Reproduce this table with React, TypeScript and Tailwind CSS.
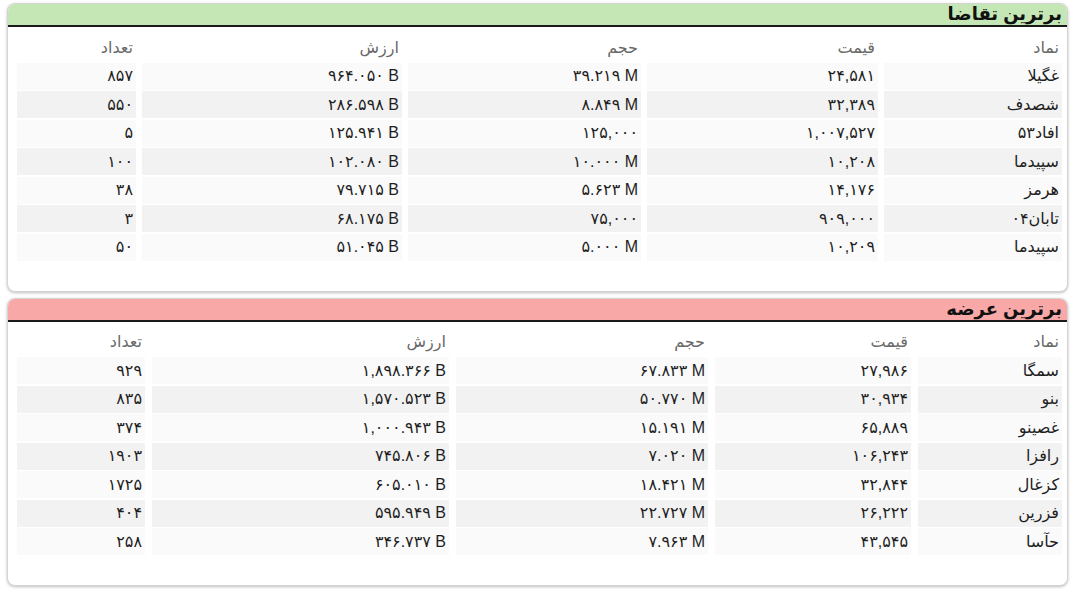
import React from "react";

type Row = [string, string, string, string, string];

const demand: Row[] = [
  ["غگیلا", "۲۴,۵۸۱", "۳۹.۲۱۹ M", "۹۶۴.۰۵۰ B", "۸۵۷"],
  ["شصدف", "۳۲,۳۸۹", "۸.۸۴۹ M", "۲۸۶.۵۹۸ B", "۵۵۰"],
  ["افاد۵۳", "۱,۰۰۷,۵۲۷", "۱۲۵,۰۰۰", "۱۲۵.۹۴۱ B", "۵"],
  ["سپیدما", "۱۰,۲۰۸", "۱۰.۰۰۰ M", "۱۰۲.۰۸۰ B", "۱۰۰"],
  ["هرمز", "۱۴,۱۷۶", "۵.۶۲۳ M", "۷۹.۷۱۵ B", "۳۸"],
  ["تابان۰۴", "۹۰۹,۰۰۰", "۷۵,۰۰۰", "۶۸.۱۷۵ B", "۳"],
  ["سپیدما", "۱۰,۲۰۹", "۵.۰۰۰ M", "۵۱.۰۴۵ B", "۵۰"],
];

const supply: Row[] = [
  ["سمگا", "۲۷,۹۸۶", "۶۷.۸۳۳ M", "۱,۸۹۸.۳۶۶ B", "۹۲۹"],
  ["بنو", "۳۰,۹۳۴", "۵۰.۷۷۰ M", "۱,۵۷۰.۵۲۳ B", "۸۳۵"],
  ["غصینو", "۶۵,۸۸۹", "۱۵.۱۹۱ M", "۱,۰۰۰.۹۴۳ B", "۳۷۴"],
  ["رافزا", "۱۰۶,۲۴۳", "۷.۰۲۰ M", "۷۴۵.۸۰۶ B", "۱۹۰۳"],
  ["کزغال", "۳۲,۸۴۴", "۱۸.۴۲۱ M", "۶۰۵.۰۱۰ B", "۱۷۲۵"],
  ["فزرین", "۲۶,۲۲۲", "۲۲.۷۲۷ M", "۵۹۵.۹۴۹ B", "۴۰۴"],
  ["حآسا", "۴۳,۵۴۵", "۷.۹۶۳ M", "۳۴۶.۷۳۷ B", "۲۵۸"],
];

const headers = ["نماد", "قیمت", "حجم", "ارزش", "تعداد"];

interface CardProps {
  title: string;
  barClass: string;
  gridClass: string;
  rows: Row[];
}

const Card = ({ title, barClass, gridClass, rows }: CardProps) => (
  <div className="rounded-lg border border-[#d4d4d4] bg-white shadow-[0_1px_3px_rgba(0,0,0,0.25)] overflow-hidden">
    <div className={`h-[23px] border-b-2 border-[#1a1a1a] px-[5px] flex items-end pb-[2px] ${barClass}`}>
      <span className="text-[18px] font-bold text-[#111] leading-none">{title}</span>
    </div>
    <div className="pt-[7px] pb-[30px] pr-[5px] pl-[9px]">
      <div className={`grid gap-y-[1.5px] ${gridClass}`}>
        {headers.map((h) => (
          <div key={h} className="h-[27px] flex items-center pr-[3px] text-[#6a6a6a]">
            {h}
          </div>
        ))}
        {rows.map((r, i) =>
          r.map((c, j) => (
            <div
              key={`${i}-${j}`}
              className={`h-[27px] flex items-center pr-[3px] text-[#1e1e1e] ${
                i % 2 === 1 ? "bg-[#f2f2f2]" : "bg-[#fafafa]"
              }`}
            >
              <span dir="ltr">{c}</span>
            </div>
          ))
        )}
      </div>
    </div>
  </div>
);

export default function App() {
  return (
    <div
      dir="rtl"
      className="w-[1075px] h-[592px] bg-white px-[7px] pt-[3px] flex flex-col gap-[6px] text-[16px]"
      style={{ fontFamily: '"Liberation Sans", "DejaVu Sans", sans-serif' }}
    >
      <Card
        title="برترین تقاضا"
        barClass="bg-[#c4e7b5]"
        gridClass="grid-cols-[178px_231px_233px_260px_1fr] gap-x-[6px]"
        rows={demand}
      />
      <Card
        title="برترین عرضه"
        barClass="bg-[#f9a8a8]"
        gridClass="grid-cols-[144px_196px_252px_297px_1fr] gap-x-[7px]"
        rows={supply}
      />
    </div>
  );
}
